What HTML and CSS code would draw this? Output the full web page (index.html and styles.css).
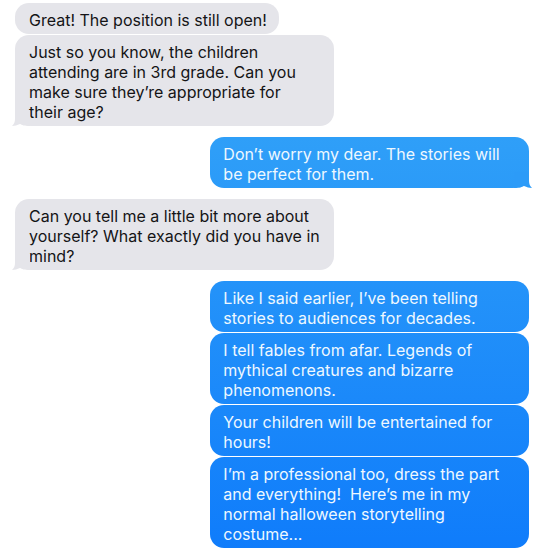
FILE: index.html
```html
<!DOCTYPE html>
<html lang="en">
<head>
<meta charset="utf-8">
<meta name="viewport" content="width=device-width, initial-scale=1">
<title>Messages</title>
<link rel="stylesheet" href="styles.css">
</head>
<body>
<main class="thread">
  <section class="group received">
    <p class="bubble">Great! The position is still open!</p>
    <p class="bubble wide tailed">Just so you know, the children attending are in 3rd grade. Can you make sure they’re appropriate for<br>their age?<svg class="tail" viewBox="0 0 18 16" aria-hidden="true"><path d="M3 0V9C3 12 2 14 0 16C3 16 5 15 8 14C10 15 12 16 18 16V0Z"/></svg></p>
  </section>
  <section class="group sent">
    <p class="bubble wide tailed">Don’t worry my dear. The stories will be perfect for them.<svg class="tail" viewBox="0 0 18 16" aria-hidden="true"><path d="M3 0V9C3 12 2 14 0 16C3 16 5 15 8 14C10 15 12 16 18 16V0Z"/></svg></p>
  </section>
  <section class="group received">
    <p class="bubble wide tailed">Can you tell me a little bit more about yourself? What exactly did you have in mind?<svg class="tail" viewBox="0 0 18 16" aria-hidden="true"><path d="M3 0V9C3 12 2 14 0 16C3 16 5 15 8 14C10 15 12 16 18 16V0Z"/></svg></p>
  </section>
  <section class="group sent">
    <p class="bubble wide">Like I said earlier, I’ve been telling stories to audiences for decades.</p>
    <p class="bubble wide">I tell fables from afar. Legends of mythical creatures and bizarre phenomenons.</p>
    <p class="bubble wide">Your children will be entertained for hours!</p>
    <p class="bubble wide pre">I’m a professional too, dress the part and everything!  Here’s me in my normal halloween storytelling costume...</p>
  </section>
</main>
</body>
</html>
```
FILE: styles.css
```css
* { box-sizing: border-box; }

body {
  margin: 0;
  background: #fff;
  font: 16px/20px Inter, "Liberation Sans", sans-serif;
  color: #141416;
}

.thread {
  display: flex;
  flex-direction: column;
  gap: 11px;
  padding: 3px 11px 3px 15px;
}

.group {
  display: flex;
  flex-direction: column;
  align-items: flex-start;
  gap: 1px;
}

.sent { align-items: flex-end; color: #eef8ff; }

.bubble {
  position: relative;
  margin: 0;
  padding: 7px 12px 4px 14px;
  border-radius: 14px;
  background: #e5e5ea;
}

.wide { width: 62%; }
.pre { white-space: pre-wrap; }

/* One gradient runs behind the whole thread and shows through every sent bubble. */
.sent .bubble {
  padding-left: 13px;
  background: linear-gradient(#2f9ff8 25%, #0f7cfb) fixed;
}

/* The tail draws the corner that it grows out of. */
.tailed { border-bottom-left-radius: 16px; }
.sent .tailed { border-bottom-left-radius: 14px; border-bottom-right-radius: 16px; }

.tail {
  position: absolute;
  left: -3px;
  bottom: 0;
  width: 18px;
  height: 16px;
  fill: #e5e5ea;
}

.sent .tail {
  left: auto;
  right: -3px;
  fill: #2c9bf8;
  transform: scaleX(-1);
}
```
